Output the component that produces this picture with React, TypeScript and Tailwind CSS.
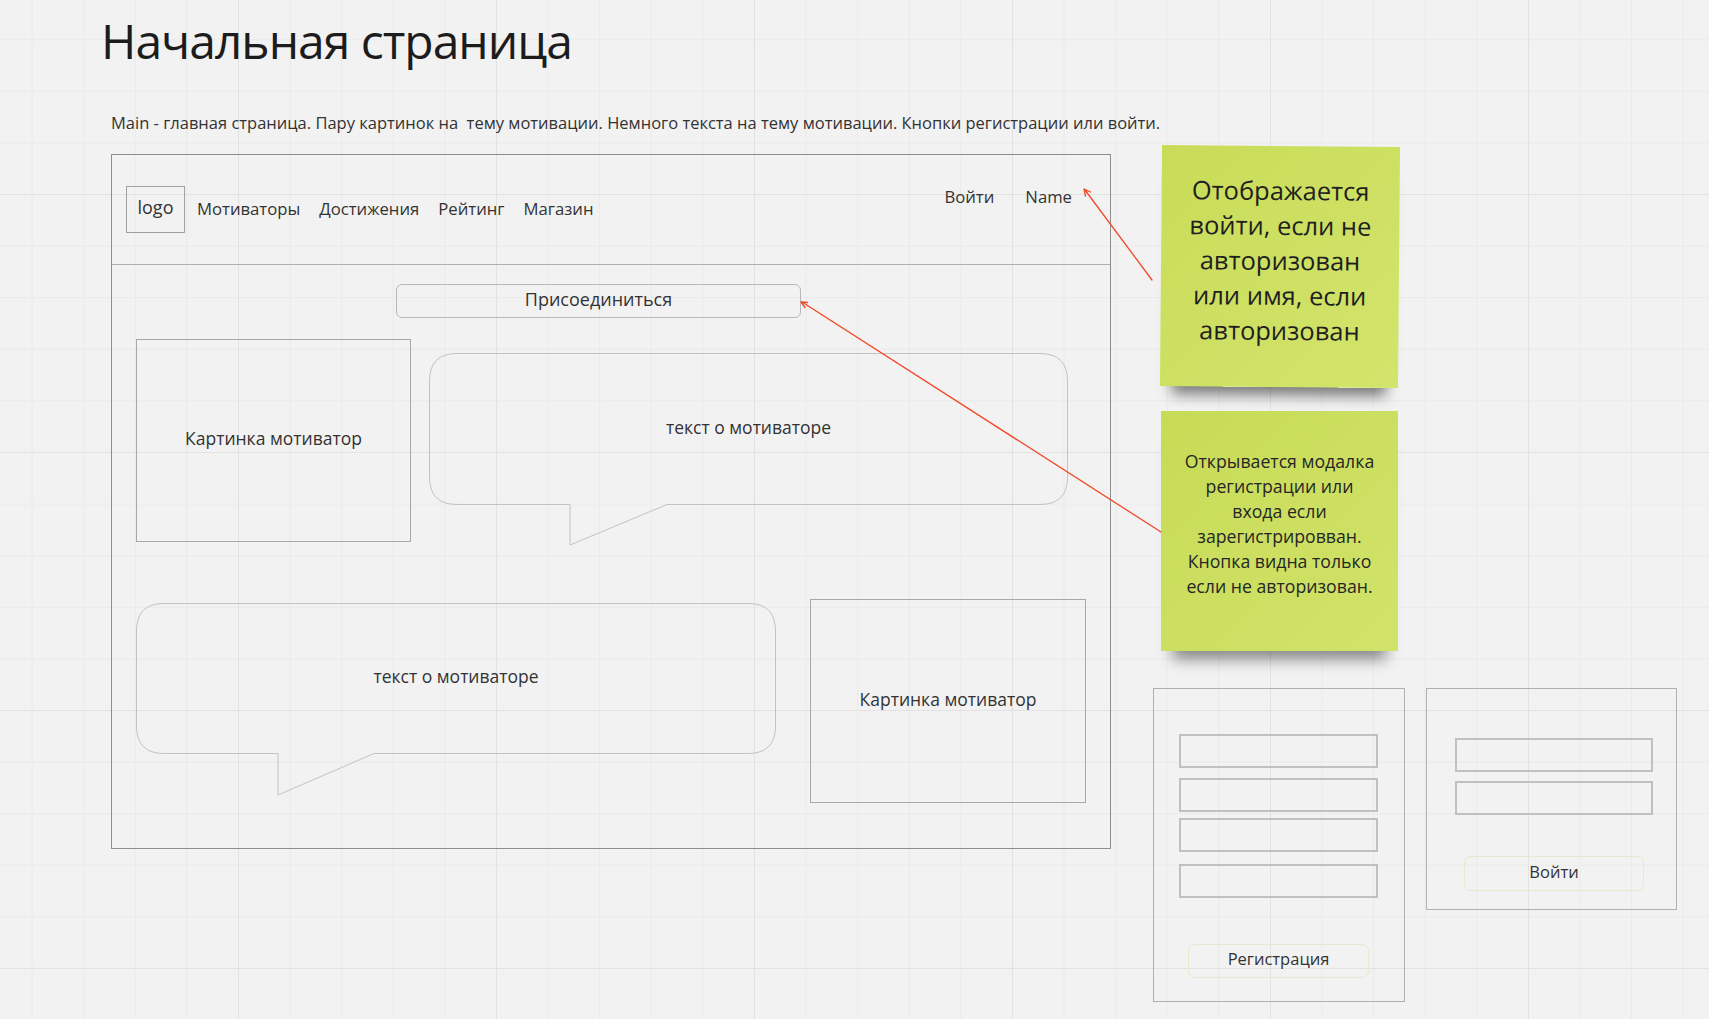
import React from "react";

// Miro-like board: wireframe of the main page + sticky notes + modal sketches

const FONT = "font-['Open_Sans',_'Liberation_Sans',sans-serif]";

function Bubble({
  w,
  h,
  tailL,
  tailR,
  tailH,
  label,
  textTop,
}: {
  w: number;
  h: number;
  tailL: number;
  tailR: number;
  tailH: number;
  label: string;
  textTop: number;
}) {
  const r = 28;
  const d = `M ${r} 0.5 H ${w - r} Q ${w - 0.5} 0.5 ${w - 0.5} ${r} V ${h - r} Q ${w - 0.5} ${h - 0.5} ${w - r} ${h - 0.5} H ${tailR} L ${tailL} ${h + tailH} V ${h - 0.5} H ${r} Q 0.5 ${h - 0.5} 0.5 ${h - r} V ${r} Q 0.5 0.5 ${r} 0.5 Z`;
  return (
    <div className="relative shrink-0" style={{ width: w, height: h + tailH }}>
      <svg className="absolute inset-0" width={w} height={h + tailH + 1}>
        <path d={d} fill="none" stroke="#c2c2c2" strokeWidth="1" />
      </svg>
      <div
        className="absolute left-0 right-0 text-center text-[17.5px] leading-[22px] text-[#333]"
        style={{ top: textTop }}
      >
        {label}
      </div>
    </div>
  );
}

function PicBox({ w, h, label, lift = 0 }: { w: number; h: number; label: string; lift?: number }) {
  return (
    <div
      className="shrink-0 border border-[#a8a8a8] flex items-center justify-center text-[17.5px] text-[#333]"
      style={{ width: w, height: h, paddingBottom: lift }}
    >
      {label}
    </div>
  );
}

function Field({ w, mt }: { w: number; mt: number }) {
  return <div className="h-[34px] border-2 border-[#c0c0c0]" style={{ width: w, marginTop: mt }} />;
}

export default function App() {
  return (
    <div
      className={`relative w-[1709px] h-[1019px] overflow-hidden bg-[#f2f2f2] ${FONT} bg-[image:linear-gradient(to_right,#e2e2e2_1px,transparent_1px),linear-gradient(to_bottom,#e2e2e2_1px,transparent_1px),linear-gradient(to_right,#eaeaea_1px,transparent_1px),linear-gradient(to_bottom,#eaeaea_1px,transparent_1px)] bg-size-[258px_258px,258px_258px,51.6px_51.6px,51.6px_51.6px] bg-position-[238px_194px]`}
    >
      {/* title */}
      <h1 className="absolute left-[101px] top-[17px] text-[48px] leading-none font-normal text-[#1c1c1c] tracking-[-1px]">
        Начальная страница
      </h1>
      <p className="absolute left-[111px] top-[113px] text-[16.5px] leading-[20px] text-[#333] whitespace-pre">
        Main - главная страница. Пару картинок на  тему мотивации. Немного текста на тему мотивации. Кнопки регистрации или войти.
      </p>

      {/* wireframe frame */}
      <div className="absolute left-[111px] top-[154px] w-[1000px] h-[695px] border border-[#8e8e8e] flex flex-col">
        {/* header */}
        <div className="h-[110px] shrink-0 border-b border-[#b0b0b0] flex items-center pl-[14px] pr-[39px] text-[16.7px] text-[#333]">
          <div className="w-[59px] h-[47px] border border-[#a0a0a0] flex items-center justify-center text-[18px] pb-[4px]">
            logo
          </div>
          <nav className="flex gap-[19px] ml-[12px] mt-[-1px]">
            <span>Мотиваторы</span>
            <span>Достижения</span>
            <span>Рейтинг</span>
            <span>Магазин</span>
          </nav>
          <div className="ml-auto flex gap-[31px] mb-[25px] mr-[-1px]">
            <span>Войти</span>
            <span>Name</span>
          </div>
        </div>

        {/* body */}
        <div className="flex flex-col pl-[24px]">
          <div className="mt-[19px] ml-[260px] w-[405px] h-[34px] rounded-[6px] border border-[#b8b8b8] flex items-center justify-center pb-[3px] text-[18px] text-[#333]">
            Присоединиться
          </div>

          <div className="mt-[21px] flex items-start">
            <PicBox w={275} h={203} label="Картинка мотиватор" lift={4} />
            <div className="ml-[18px] mt-[14px]">
              <Bubble w={639} h={152} tailL={141} tailR={238} tailH={40} label="текст о мотиваторе" textTop={63} />
            </div>
          </div>

          <div className="mt-[54px] flex items-start">
            <div className="mt-[4px]">
              <Bubble w={640} h={151} tailL={142} tailR={238} tailH={41} label="текст о мотиваторе" textTop={62} />
            </div>
            <div className="ml-[34px]">
              <PicBox w={276} h={204} label="Картинка мотиватор" lift={4} />
            </div>
          </div>
        </div>
      </div>

      {/* sticky notes */}
      <div className="absolute left-[1161px] top-[146px] w-[238px] h-[241px] rotate-[0.5deg] bg-gradient-to-br from-[#c9dc58] to-[#d3e46c] shadow-[0_20px_14px_-12px_rgba(0,0,0,0.5)] flex items-center justify-center pb-[12px] text-center text-[25.5px] leading-[35px] text-[#1f1f1f]">
        <p>
          Отображается
          <br />
          войти, если не
          <br />
          авторизован
          <br />
          или имя, если
          <br />
          авторизован
        </p>
      </div>

      <div className="absolute left-[1161px] top-[411px] w-[237px] h-[240px] bg-gradient-to-br from-[#c7db56] to-[#d1e36a] shadow-[0_20px_14px_-12px_rgba(0,0,0,0.45)] flex items-center justify-center pb-[14px] text-center text-[17.7px] leading-[25px] text-[#262626]">
        <p>
          Открывается модалка
          <br />
          регистрации или
          <br />
          входа если
          <br />
          зарегистрировван.
          <br />
          Кнопка видна только
          <br />
          если не авторизован.
        </p>
      </div>

      {/* registration modal sketch */}
      <div className="absolute left-[1153px] top-[688px] w-[252px] h-[314px] border border-[#b0b0b0] flex flex-col pl-[25px]">
        <Field w={199} mt={45} />
        <Field w={199} mt={10} />
        <Field w={199} mt={6} />
        <Field w={199} mt={12} />
        <div className="mt-[46px] ml-[9px] w-[181px] h-[34px] rounded-[7px] border border-[#dfeccd] flex items-center justify-center pb-[4px] text-[16.5px] text-[#333]">
          Регистрация
        </div>
      </div>

      {/* login modal sketch */}
      <div className="absolute left-[1426px] top-[688px] w-[251px] h-[222px] border border-[#b0b0b0] flex flex-col pl-[28px]">
        <Field w={198} mt={49} />
        <Field w={198} mt={9} />
        <div className="mt-[41px] ml-[9px] w-[180px] h-[35px] rounded-[7px] border border-[#dfeccd] flex items-center justify-center pb-[2px] text-[16.5px] text-[#333]">
          Войти
        </div>
      </div>

      {/* connector arrows */}
      <svg className="absolute inset-0 pointer-events-none" width={1709} height={1019}>
        <g stroke="#f24726" strokeWidth="1.3" fill="none" strokeLinecap="round">
          <line x1={1152} y1={280} x2={1085} y2={190} />
          <path d="M 1084 189 L 1085.5 196 M 1084 189 L 1090.5 192" />
          <line x1={1161} y1={532} x2={802} y2={302} />
          <path d="M 801 302 L 805 307.5 M 801 302 L 807.5 302.5" />
        </g>
      </svg>
    </div>
  );
}
